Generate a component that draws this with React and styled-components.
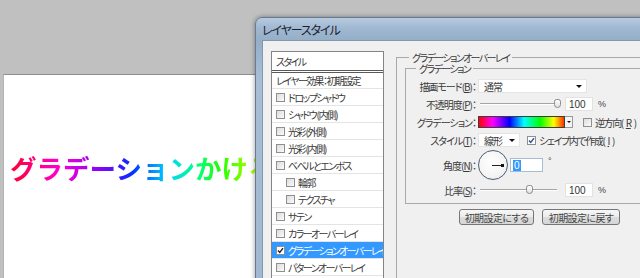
import React from 'react';
import styled, { createGlobalStyle } from 'styled-components';

const jp = `"Noto Sans CJK JP", "Noto Sans", sans-serif`;

const GlobalStyle = createGlobalStyle`
  html, body { margin: 0; padding: 0; background: #c0c0c0; }
  body { font-family: ${jp}; }
`;

const Desktop = styled.div`
  position: relative;
  width: 640px;
  height: 278px;
  overflow: hidden;
  background: #c0c0c0;
  padding: 74px 0 0 3px;
  box-sizing: border-box;
`;

const Canvas = styled.div`
  width: 330px;
  height: 230px;
  background: #fff;
  border-top: 1px solid #8e8e8e;
  border-left: 1px solid #b4b4b4;
  box-sizing: border-box;
  padding: 77px 0 0 6px;
`;

const Headline = styled.span`
  display: inline-block;
  white-space: nowrap;
  font-family: ${jp};
  font-weight: 700;
  font-size: 26.5px;
  line-height: 32px;
  background: linear-gradient(90deg, #ff0030 0px, #ff00d0 50px, #8a00ff 90px, #0030ff 122px,
    #00d0ff 157px, #00ff90 185px, #20ff00 210px, #a8ff00 242px, #ffff00 285px, #ff4000 340px);
  -webkit-background-clip: text;
  background-clip: text;
  color: transparent;
`;

const Window = styled.div`
  position: absolute;
  left: 255px;
  top: 17px;
  width: 440px;
  height: 300px;
  box-sizing: border-box;
  border: 1px solid #677b92;
  border-radius: 7px 0 0 0;
  background: linear-gradient(180deg, #b7cbe0 0px, #a0b8d1 10px, #95afc9 22px, #a7bed6 60px, #9fb7d0 100%);
  padding-left: 6px;
  display: flex;
  flex-direction: column;
  box-shadow: 0 0 5px rgba(0, 0, 0, 0.4);
`;

const TitleBar = styled.div`
  height: 22px;
  flex: none;
  display: flex;
  align-items: center;
  font-family: ${jp};
  font-size: 12px;
  letter-spacing: -1.1px;
  font-feature-settings: "palt";
  color: #1b2230;
`;

const Body = styled.div`
  flex: 1;
  display: flex;
  align-items: flex-start;
  gap: 12px;
  padding: 10px 0 0 8px;
  background: #f0f0f0;
  border-top: 1px solid #8797ab;
  border-left: 1px solid #8797ab;
`;

const StyleList = styled.div`
  flex: none;
  width: 113px;
  box-sizing: border-box;
  border: 1px solid #848484;
  background: #fff;
  font-family: ${jp};
  font-size: 10px;
  letter-spacing: -1.6px;
  font-feature-settings: "palt";
  color: #3a3a3a;
  overflow: hidden;
`;

const ListHead = styled.div`
  height: 18px;
  display: flex;
  align-items: center;
  padding-left: 4px;
  border-bottom: 3px double #5a5a5a;
`;

const ListRow = styled.div`
  height: ${p => p.$h || 16}px;
  display: flex;
  align-items: center;
  gap: 3px;
  padding-left: ${p => (p.$indent ? 14 : 4)}px;
  border-bottom: 1px solid #e4e4e4;
  background: ${p => (p.$selected ? '#3399ff' : '#fff')};
  color: ${p => (p.$selected ? '#fff' : 'inherit')};
  white-space: nowrap;
`;

const Box = styled.span`
  flex: none;
  width: 9px;
  height: 9px;
  box-sizing: border-box;
  border: 1px solid #8f8f8f;
  background: ${p => (p.$white ? '#fff' : 'linear-gradient(135deg, #dcdcdc, #fbfbfb)')};
  display: flex;
  align-items: center;
  justify-content: center;
`;

const Group = styled.fieldset`
  margin: ${p => (p.$inner ? '-2px 0 0 0' : '0')};
  padding: ${p => (p.$inner ? '0 0 4px 0' : '0 0 0 8px')};
  border: 1px solid #a9a9a9;
  border-right: none;
  ${p => (!p.$inner ? 'border-bottom: none; width: 300px; height: 260px;' : '')}
  min-width: 0;
  box-sizing: border-box;
`;

const Legend = styled.legend`
  margin-left: ${p => p.$offset}px;
  padding: 0 3px;
  font-family: ${jp};
  font-size: 10px;
  line-height: 13px;
  letter-spacing: -1.6px;
  font-feature-settings: "palt";
  color: #3a3a3a;
`;

const Form = styled.div`
  display: grid;
  grid-template-columns: 70px 1fr;
  grid-template-rows: 18px 18px 18px 18px 32px 18px;
  column-gap: 2px;
  padding-top: 2px;
  font-family: ${jp};
  font-size: 10px;
  letter-spacing: -1px;
  font-feature-settings: "palt";
  color: #3a3a3a;
`;

const Label = styled.div`
  justify-self: end;
  align-self: center;
  white-space: nowrap;
`;

const Cell = styled.div`
  display: flex;
  align-items: center;
  white-space: nowrap;
`;

const Select = styled.div`
  width: ${p => p.$w}px;
  height: 14px;
  box-sizing: border-box;
  background: #fff;
  border: 1px solid #e4e4e4;
  display: flex;
  align-items: center;
  justify-content: space-between;
  padding: 0 4px 0 5px;
`;

const Arrow = styled.span`
  width: 0;
  height: 0;
  border-left: 3px solid transparent;
  border-right: 3px solid transparent;
  border-top: 3px solid #111;
`;

const Slider = styled.div`
  position: relative;
  width: 82px;
  height: 14px;
  flex: none;
`;

const Track = styled.div`
  position: absolute;
  left: 2px;
  right: 3px;
  top: 6px;
  height: 1px;
  background: #a4a4a4;
  box-shadow: 0 1px 0 #fff;
`;

const Thumb = styled.div`
  position: absolute;
  top: 2px;
  width: 7px;
  height: 9px;
  box-sizing: border-box;
  border: 1px solid #8a8a8a;
  border-radius: 3px 3px 4px 4px;
  background: linear-gradient(#fdfdfd, #e2e2e2);
`;

const NumberBox = styled.div`
  width: 28px;
  height: 14px;
  margin-left: 5px;
  box-sizing: border-box;
  background: #fff;
  border: 1px solid #e2e2e2;
  padding-left: 3px;
  display: flex;
  align-items: center;
  font-family: "Liberation Sans", sans-serif;
  font-size: 10px;
  letter-spacing: 0;
  color: #333;
`;

const Unit = styled.span`
  margin-left: 5px;
  font-family: "Liberation Sans", sans-serif;
  font-size: 9px;
  letter-spacing: 0;
  color: #444;
  align-self: ${p => (p.$top ? 'flex-start' : 'center')};
  margin-top: ${p => (p.$top ? '7px' : '0')};
`;

const GradientBar = styled.div`
  width: 87px;
  height: 12px;
  box-sizing: border-box;
  border: 1px solid #3c3c3c;
  background: linear-gradient(90deg, #ff0000 0%, #ff00ff 16%, #0000ff 36%, #00ffff 53%,
    #00ff00 72%, #ffff00 88%, #ff3000 100%);
`;

const DropButton = styled.div`
  width: 8px;
  height: 12px;
  box-sizing: border-box;
  border: 1px solid #9a9a9a;
  border-left: none;
  background: #f4f4f4;
  display: flex;
  align-items: center;
  justify-content: center;
`;

const SmallArrow = styled(Arrow)`
  border-left-width: 2px;
  border-right-width: 2px;
  border-top-width: 2px;
`;

const CheckLabel = styled.span`
  margin-left: ${p => p.$gap}px;
  display: inline-flex;
  align-items: center;
  gap: 3px;
  letter-spacing: -1.4px;
`;

const Dial = styled.div`
  position: relative;
  width: 30px;
  height: 30px;
  box-sizing: border-box;
  border-radius: 50%;
  border: 1px solid #4c5c72;
  background: radial-gradient(circle at 45% 40%, #ffffff 0%, #f4f4f4 60%, #e2e2e2 100%);
  flex: none;
`;

const DialHand = styled.div`
  position: absolute;
  left: 13px;
  top: 14px;
  width: 11px;
  height: 1px;
  background: #222;
  &::after {
    content: "";
    position: absolute;
    right: -1px;
    top: -1px;
    width: 3px;
    height: 3px;
    background: #111;
  }
`;

const AngleBox = styled.div`
  width: 33px;
  height: 14px;
  margin-left: 2px;
  box-sizing: border-box;
  background: #fff;
  border: 1px solid #a9bcd6;
  padding-left: 2px;
  display: flex;
  align-items: center;
  font-family: "Liberation Sans", sans-serif;
  font-size: 10px;
  letter-spacing: 0;
`;

const Selected = styled.span`
  background: #3399ff;
  color: #fff;
  line-height: 11px;
  padding: 0 1px;
`;

const ButtonRow = styled.div`
  display: flex;
  gap: 8px;
  margin-top: 5px;
  padding-left: 54px;
`;

const Button = styled.button`
  width: ${p => p.$w}px;
  height: 16px;
  padding: 0;
  box-sizing: border-box;
  border: 1px solid #767676;
  border-radius: 3px;
  background: linear-gradient(#f7f7f7 0%, #ebebeb 50%, #dcdcdc 51%, #d6d6d6 100%);
  font-family: ${jp};
  font-size: 10px;
  letter-spacing: -0.6px;
  font-feature-settings: "palt";
  color: #444;
`;

function Check({ checked, white, blue }) {
  return (
    <Box $white={white || checked}>
      {checked && (
        <svg width="7" height="7" viewBox="0 0 7 7">
          <path d="M1 3.5 L2.8 5.5 L6 1.2" fill="none" stroke={blue ? '#2a4f9a' : '#222'} strokeWidth="1.4" />
        </svg>
      )}
    </Box>
  );
}

function Range({ value }) {
  return (
    <Slider>
      <Track />
      <Thumb style={{ left: `${2 + value * 77 - 3.5}px` }} />
    </Slider>
  );
}

const effects = [
  { name: 'ドロップシャドウ' },
  { name: 'シャドウ (内側)' },
  { name: '光彩 (外側)' },
  { name: '光彩 (内側)' },
  { name: 'ベベルとエンボス' },
  { name: '輪郭', indent: true },
  { name: 'テクスチャ', indent: true },
  { name: 'サテン' },
  { name: 'カラーオーバーレイ' },
  { name: 'グラデーションオーバーレイ', selected: true },
  { name: 'パターンオーバーレイ' },
  { name: '境界線' },
];

export default function App() {
  return (
    <>
      <GlobalStyle />
      <Desktop>
        <Canvas>
          <Headline>グラデーションかける</Headline>
        </Canvas>

        <Window>
          <TitleBar>レイヤースタイル</TitleBar>
          <Body>
            <StyleList>
              <ListHead>スタイル</ListHead>
              <ListRow $h={15}>レイヤー効果：初期設定</ListRow>
              {effects.map(e => (
                <ListRow key={e.name} $indent={e.indent} $selected={e.selected}>
                  <Check checked={e.selected} />
                  {e.name}
                </ListRow>
              ))}
            </StyleList>

            <Group>
              <Legend $offset={4}>グラデーションオーバーレイ</Legend>
              <Group $inner>
                <Legend $offset={10}>グラデーション</Legend>
                <Form>
                  <Label>描画モード(<u>B</u>)：</Label>
                  <Cell>
                    <Select $w={109}>通常<Arrow /></Select>
                  </Cell>

                  <Label>不透明度(<u>P</u>)：</Label>
                  <Cell>
                    <Range value={1} />
                    <NumberBox>100</NumberBox>
                    <Unit>%</Unit>
                  </Cell>

                  <Label>グラデーション：</Label>
                  <Cell>
                    <GradientBar />
                    <DropButton><SmallArrow /></DropButton>
                    <CheckLabel $gap={10}>
                      <Check />
                      逆方向(<u>R</u>)
                    </CheckLabel>
                  </Cell>

                  <Label>スタイル(<u>T</u>)：</Label>
                  <Cell>
                    <Select $w={42}>線形<Arrow /></Select>
                    <CheckLabel $gap={7}>
                      <Check checked blue />
                      シェイプ内で作成(<u>I</u>)
                    </CheckLabel>
                  </Cell>

                  <Label>角度(<u>N</u>)：</Label>
                  <Cell>
                    <Dial><DialHand /></Dial>
                    <AngleBox><Selected>0</Selected></AngleBox>
                    <Unit $top>°</Unit>
                  </Cell>

                  <Label>比率(<u>S</u>)：</Label>
                  <Cell>
                    <Range value={0.64} />
                    <NumberBox>100</NumberBox>
                    <Unit>%</Unit>
                  </Cell>
                </Form>
              </Group>
              <ButtonRow>
                <Button $w={75}>初期設定にする</Button>
                <Button $w={78}>初期設定に戻す</Button>
              </ButtonRow>
            </Group>
          </Body>
        </Window>
      </Desktop>
    </>
  );
}
